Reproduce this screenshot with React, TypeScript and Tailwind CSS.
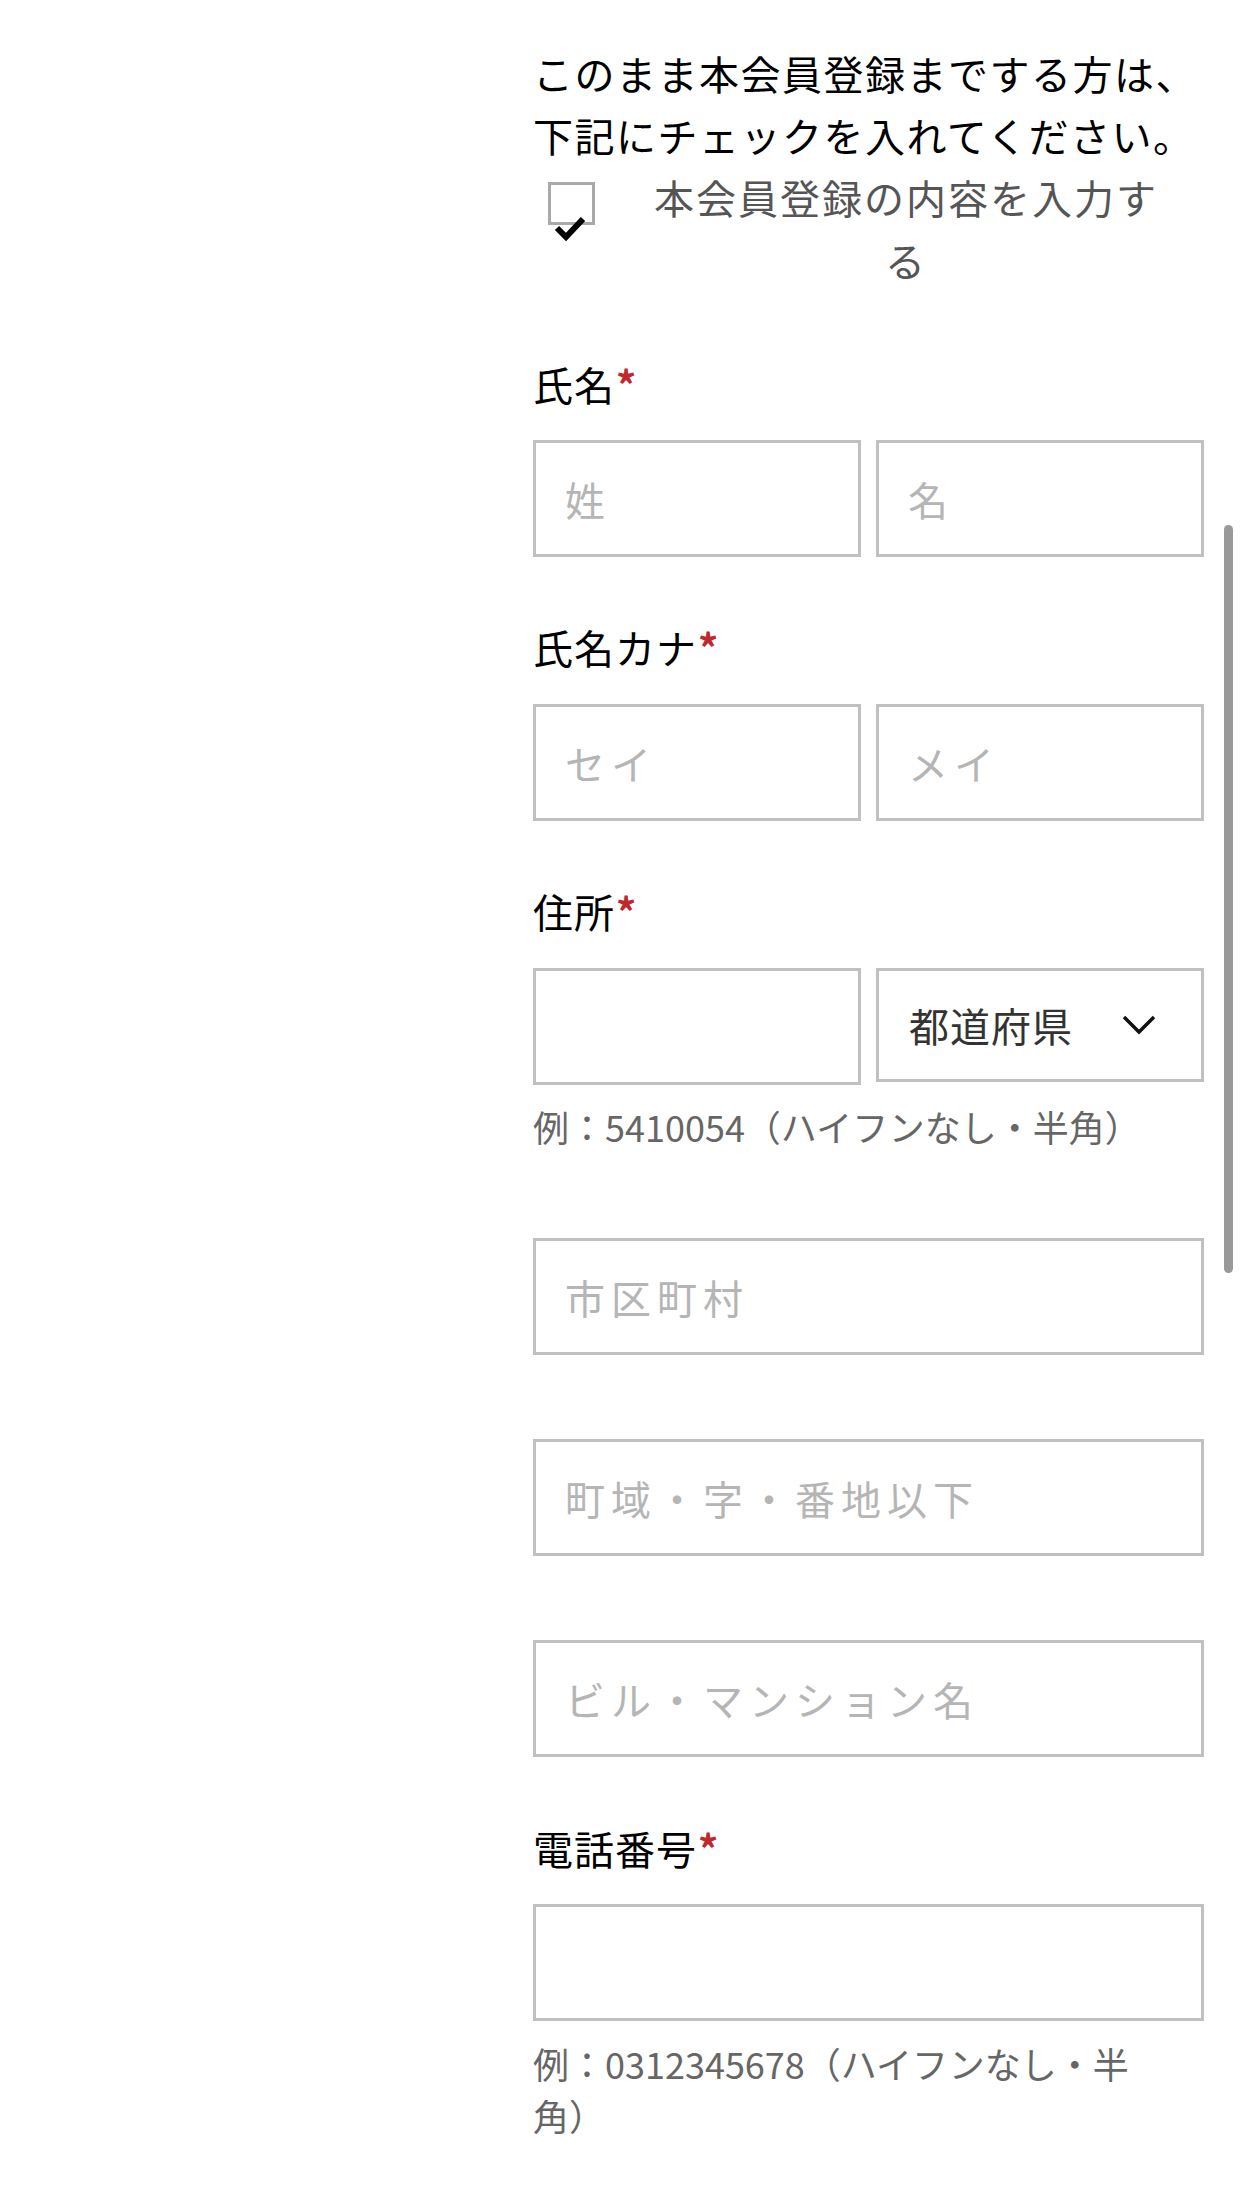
import React from "react";

const inputCls =
  "h-[117px] w-full min-w-0 border-[3px] border-[#c0c0c0] bg-white pl-[29px] text-[40px] tracking-[6px] text-[#333] outline-none placeholder:text-[#b5b5b5]";

function Label({ text, className }: { text: string; className: string }) {
  return (
    <div className={`text-[40px] leading-[56px] tracking-[1px] text-black ${className}`}>
      {text}
      <span className="ml-[1px] text-[40px] leading-none font-bold text-[#c0282d]">*</span>
    </div>
  );
}

export default function App() {
  return (
    <div className="relative min-h-[2191px] bg-white font-['Noto_Sans_CJK_JP',sans-serif]">
      <div className="ml-[533px] w-[671px] pt-[42px]">
        <p className="whitespace-nowrap text-[40px] leading-[62px] tracking-[1.5px] text-black">
          このまま本会員登録までする方は、
          <br />
          下記にチェックを入れてください。
        </p>

        {/* checkbox */}
        <div className="flex">
          <div className="relative ml-[15px] mt-[16px] h-[43px] w-[47px] shrink-0 border-[3px] border-[#a9a9a9]">
            <svg
              className="absolute left-[-3px] top-[-3px] overflow-visible"
              width="47"
              height="60"
            >
              <polyline
                points="9,46 18,55 35,37"
                stroke="#000"
                strokeWidth="6"
                fill="none"
              />
            </svg>
          </div>
          <p className="ml-[46px] w-[530px] text-center text-[40px] leading-[63px] tracking-[2px] text-[#555]">
            本会員登録の内容を入力す
            <br />る
          </p>
        </div>

        <Label text="氏名" className="mt-[64px]" />
        <div className="mt-[28px] grid grid-cols-2 gap-[15px]">
          <input type="text" placeholder="姓" className={inputCls} />
          <input type="text" placeholder="名" className={inputCls} />
        </div>

        <Label text="氏名カナ" className="mt-[62px]" />
        <div className="mt-[29px] grid grid-cols-2 gap-[15px]">
          <input type="text" placeholder="セイ" className={inputCls} />
          <input type="text" placeholder="メイ" className={inputCls} />
        </div>

        <Label text="住所" className="mt-[62px]" />
        <div className="mt-[29px] grid grid-cols-2 items-start gap-[15px]">
          <input type="text" className={inputCls} />
          <div className="flex h-[114px] min-w-0 items-center justify-between border-[3px] border-[#c0c0c0] pl-[30px] pr-[45px]">
            <span className="text-[40px] tracking-[1px] text-[#333]">都道府県</span>
            <svg width="34" height="20" viewBox="0 0 34 20">
              <polyline
                points="2,2 17,17 32,2"
                stroke="#111"
                strokeWidth="3.5"
                fill="none"
              />
            </svg>
          </div>
        </div>
        <p className="mt-[15px] text-[36px] leading-[52px] text-[#666]">
          例：5410054（ハイフンなし・半角）
        </p>

        <div className="mt-[86px]">
          <input type="text" placeholder="市区町村" className={inputCls} />
        </div>
        <div className="mt-[84px]">
          <input type="text" placeholder="町域・字・番地以下" className={inputCls} />
        </div>
        <div className="mt-[84px]">
          <input type="text" placeholder="ビル・マンション名" className={inputCls} />
        </div>

        <Label text="電話番号" className="mt-[63px]" />
        <div className="mt-[28px]">
          <input type="text" className={inputCls} />
        </div>
        <p className="mt-[16px] text-[36px] leading-[52px] text-[#666]">
          例：0312345678（ハイフンなし・半
          <br />
          角）
        </p>
      </div>

      {/* scroll indicator */}
      <div className="absolute left-[1224px] top-[525px] h-[748px] w-[9px] rounded-full bg-[#999]" />
    </div>
  );
}
